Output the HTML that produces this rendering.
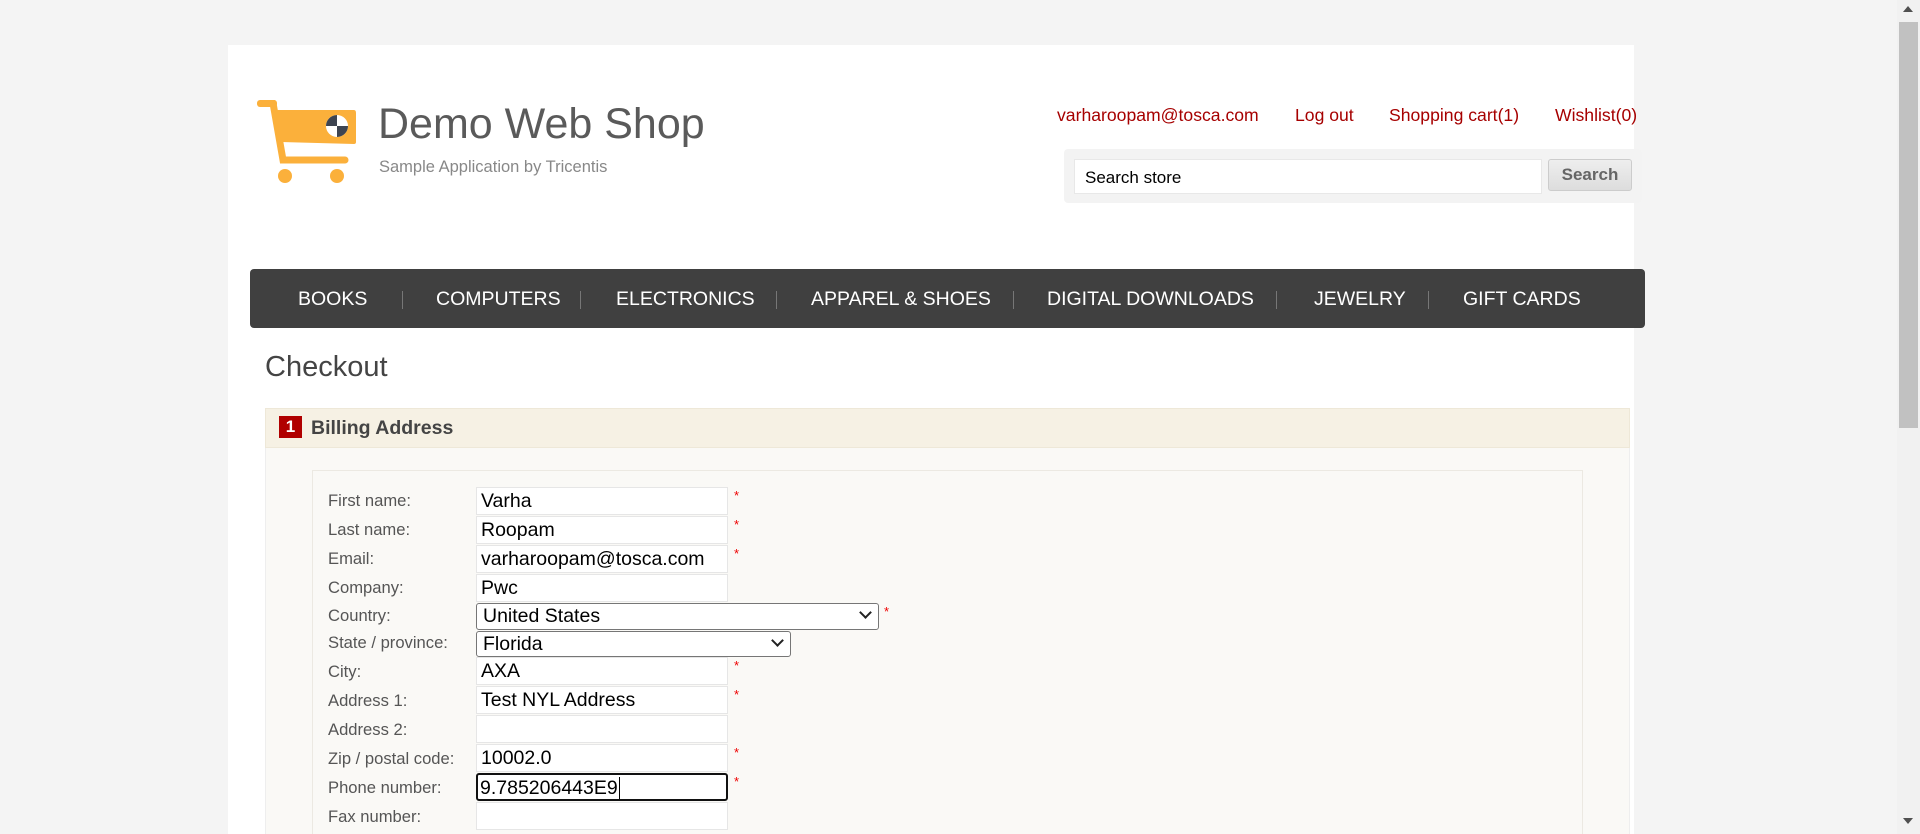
<!DOCTYPE html>
<html style="overflow:hidden;height:834px"><head><meta charset="utf-8"><style>
*{box-sizing:border-box;margin:0;padding:0}
body{width:1920px;height:834px;overflow:hidden;background:#f4f4f4;font-family:"Liberation Sans",Arial,sans-serif;position:relative}
.a{position:absolute}
#page{left:228px;top:45px;width:1406px;height:789px;background:#fff}
.lnk{color:#a60000;font-size:17.6px;top:105px}
.nav{left:250px;top:269px;width:1395px;height:59px;background:#404040;border-radius:4px}
.nv{color:#fff;font-size:19.5px;top:288px}
.sep{width:1px;height:18px;background:#777;top:291px}
.lbl{left:328px;color:#555;font-size:16.6px}
.inp{left:476px;width:252px;height:28px;background:#fff;border:1px solid #e6e6e6;font-size:19.5px;color:#000;padding-left:4px;line-height:26px}
.req{left:734px;color:#e00;font-size:13px}
.sel{left:476px;background:#fff;border:1px solid #767676;border-radius:3px;font-size:19.5px;color:#000;padding-left:6px;line-height:24px}
.chev{position:absolute;right:8px;width:9px;height:9px;border-right:2px solid #222;border-bottom:2px solid #222;transform:rotate(45deg);top:4px}
</style></head><body>
<div class="a" id="page"></div>
<svg class="a" style="left:257px;top:100px" width="100" height="86" viewBox="0 0 100 86">
<rect x="0" y="0" width="20" height="7" rx="3" fill="#fbb03b"/>
<path d="M16 3 L26 60 L88 60" stroke="#fbb03b" stroke-width="7" fill="none" stroke-linecap="round"/>
<path d="M18 10 L97 10 Q99 10 99 13 L99 42 Q99 44 97 44 L24 42 Z" fill="#fbb03b"/>
<circle cx="80" cy="26" r="11" fill="#fff"/>
<path d="M80 15 A11 11 0 0 0 69 26 L80 26Z M80 26 L91 26 A11 11 0 0 1 80 37Z" fill="#3d4451"/>
<circle cx="28" cy="76" r="7" fill="#fbb03b"/><circle cx="80" cy="76" r="7" fill="#fbb03b"/>
</svg>
<div class="a" style="left:378px;top:100px;font-size:43px;color:#5a5a5a">Demo Web Shop</div>
<div class="a" style="left:379px;top:158px;font-size:16.5px;color:#888">Sample Application by Tricentis</div>
<div class="a lnk" style="left:1057px">varharoopam@tosca.com</div>
<div class="a lnk" style="left:1295px">Log out</div>
<div class="a lnk" style="left:1389px">Shopping cart(1)</div>
<div class="a lnk" style="left:1555px">Wishlist(0)</div>
<div class="a" style="left:1064px;top:149px;width:578px;height:54px;background:#f3f3f3;border-radius:4px"></div>
<div class="a" style="left:1074px;top:159px;width:468px;height:35px;background:#fff;border:1px solid #e8e8e8;font-size:17px;color:#000;padding:8px 10px">Search store</div>
<div class="a" style="left:1548px;top:159px;width:84px;height:32px;background:linear-gradient(#eee,#ddd);border:1px solid #ccc;border-radius:3px;font-size:17px;font-weight:bold;color:#666;text-align:center;line-height:30px">Search</div>
<div class="a nav"></div>
<div class="a nv" style="left:298px">BOOKS</div>
<div class="a sep" style="left:402px"></div>
<div class="a nv" style="left:436px">COMPUTERS</div>
<div class="a sep" style="left:580px"></div>
<div class="a nv" style="left:616px">ELECTRONICS</div>
<div class="a sep" style="left:776px"></div>
<div class="a nv" style="left:811px">APPAREL &amp; SHOES</div>
<div class="a sep" style="left:1013px"></div>
<div class="a nv" style="left:1047px">DIGITAL DOWNLOADS</div>
<div class="a sep" style="left:1276px"></div>
<div class="a nv" style="left:1314px">JEWELRY</div>
<div class="a sep" style="left:1428px"></div>
<div class="a nv" style="left:1463px">GIFT CARDS</div>
<div class="a" style="left:265px;top:351px;font-size:29px;color:#444">Checkout</div>
<div class="a" style="left:265px;top:408px;width:1365px;height:426px;background:#faf9f6;border:1px solid #eee;border-bottom:none"></div>
<div class="a" style="left:265px;top:408px;width:1365px;height:40px;background:#f6f1e4;border:1px solid #eee8d8"></div>
<div class="a" style="left:279px;top:416px;width:23px;height:22px;background:#b00000;color:#fff;font-weight:bold;font-size:17px;text-align:center;line-height:22px">1</div>
<div class="a" style="left:311px;top:417px;font-size:19.5px;font-weight:bold;color:#444">Billing Address</div>
<div class="a" style="left:312px;top:470px;width:1271px;height:364px;border:1px solid #ece9e2;border-bottom:none;background:#faf9f6"></div>

<div class="a lbl" style="top:491px">First name:</div><div class="a inp" style="top:487px">Varha</div><div class="a req" style="top:488px">*</div>
<div class="a lbl" style="top:520px">Last name:</div><div class="a inp" style="top:516px">Roopam</div><div class="a req" style="top:517px">*</div>
<div class="a lbl" style="top:549px">Email:</div><div class="a inp" style="top:545px">varharoopam@tosca.com</div><div class="a req" style="top:546px">*</div>
<div class="a lbl" style="top:578px">Company:</div><div class="a inp" style="top:574px">Pwc</div>
<div class="a lbl" style="top:606px">Country:</div><div class="a sel" style="top:603px;width:403px;height:27px">United States<span class="chev"></span></div><div class="a req" style="left:884px;top:604px">*</div>
<div class="a lbl" style="top:633px">State / province:</div><div class="a sel" style="top:631px;width:315px;height:26px">Florida<span class="chev"></span></div>
<div class="a lbl" style="top:662px">City:</div><div class="a inp" style="top:657px">AXA</div><div class="a req" style="top:658px">*</div>
<div class="a lbl" style="top:691px">Address 1:</div><div class="a inp" style="top:686px">Test NYL Address</div><div class="a req" style="top:687px">*</div>
<div class="a lbl" style="top:720px">Address 2:</div><div class="a inp" style="top:715px"></div>
<div class="a lbl" style="top:749px">Zip / postal code:</div><div class="a inp" style="top:744px">10002.0</div><div class="a req" style="top:745px">*</div>
<div class="a lbl" style="top:778px">Phone number:</div><div class="a inp" style="top:773px;border:2px solid #111;border-radius:3px;padding-left:2px">9.785206443E9<span style="border-left:1px solid #000;margin-left:1px"></span></div><div class="a req" style="top:774px">*</div>
<div class="a lbl" style="top:807px">Fax number:</div><div class="a inp" style="top:802px;height:28px"></div>
<div class="a" style="left:1897px;top:0;width:23px;height:834px;background:#f1f1f1"></div>
<div class="a" style="left:1899px;top:22px;width:19px;height:406px;background:#c1c1c1"></div>
<div class="a" style="left:1903px;top:6px;width:0;height:0;border-left:5px solid transparent;border-right:5px solid transparent;border-bottom:6px solid #505050"></div>
<div class="a" style="left:1903px;top:818px;width:0;height:0;border-left:5px solid transparent;border-right:5px solid transparent;border-top:6px solid #505050"></div>
</body></html>
